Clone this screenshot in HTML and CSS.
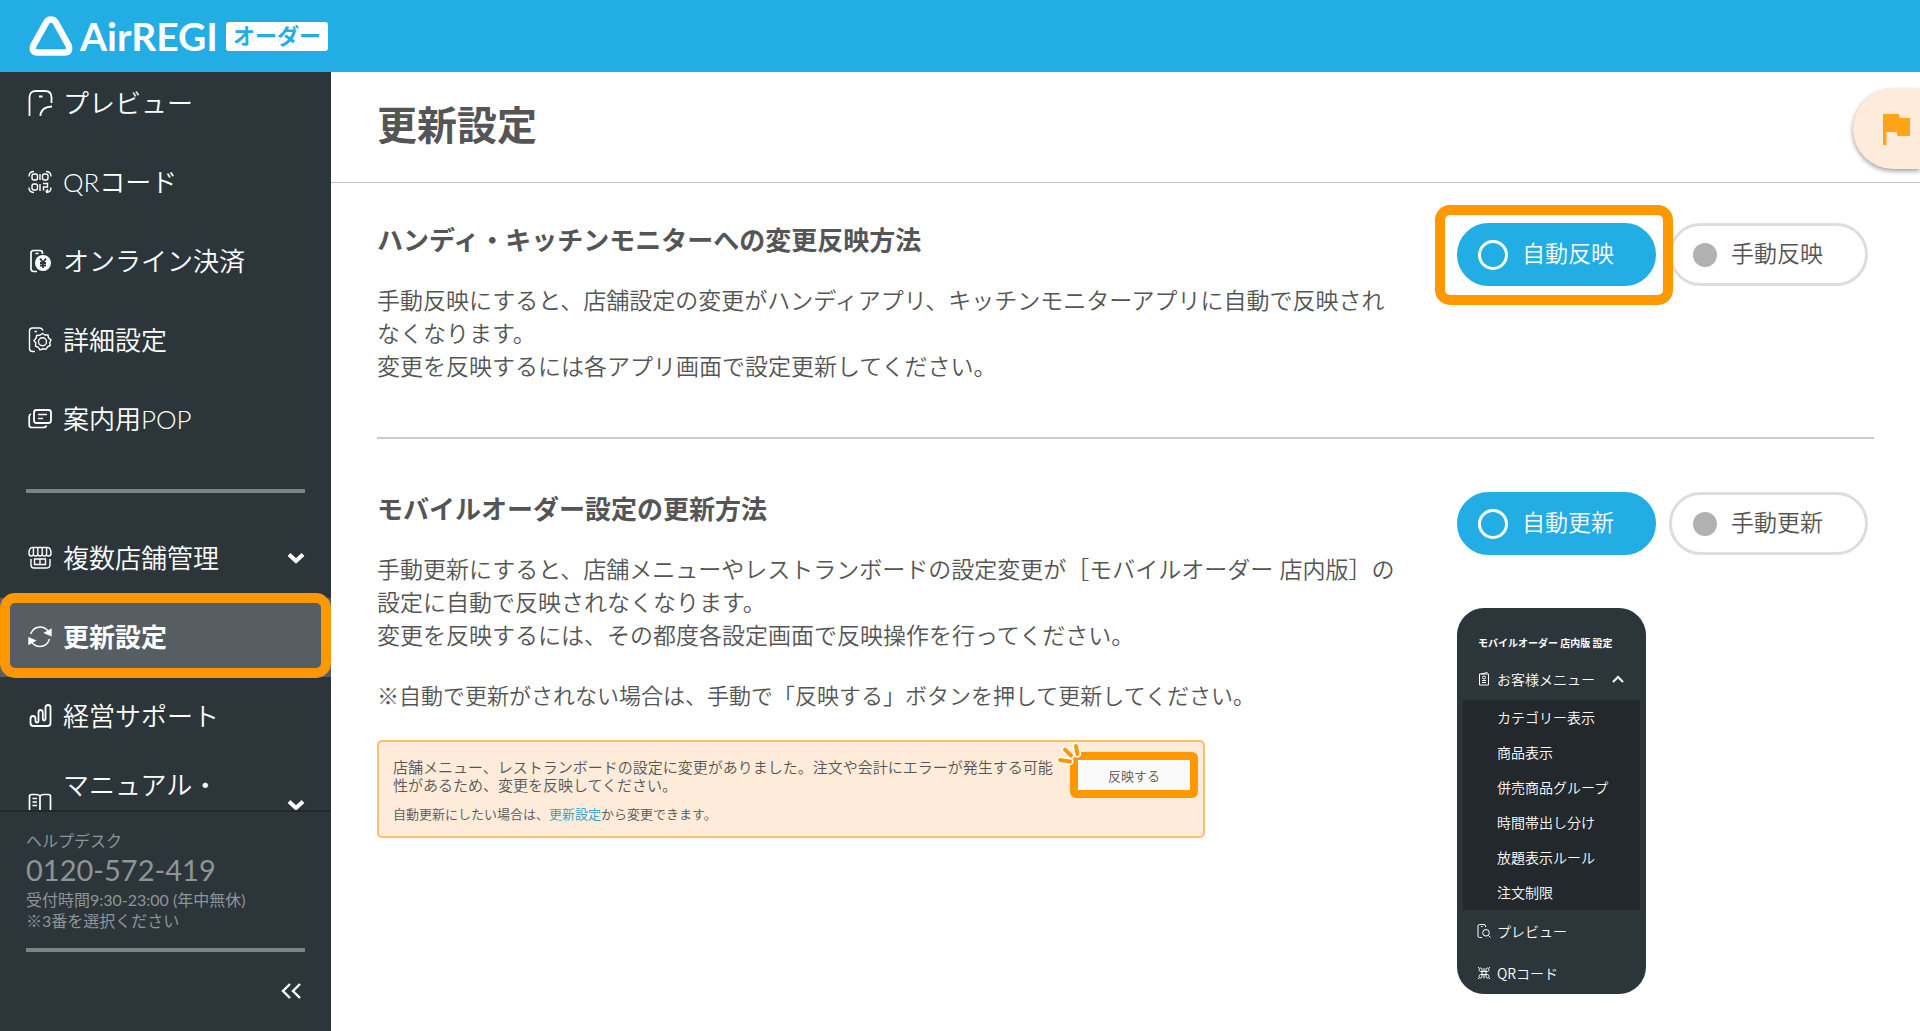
FILE: index.html
```html
<!DOCTYPE html>
<html lang="ja">
<head>
<meta charset="utf-8">
<meta name="viewport" content="width=device-width, initial-scale=1">
<title>更新設定 | AirREGI オーダー</title>
<link rel="stylesheet" href="styles.css">
</head>
<body>
<header class="topbar">
  <a class="logo" href="#">
    <svg class="logo-mark" viewBox="0 0 44 40" aria-hidden="true"><path d="M22 3.500Q25 3.500 26.600 6.200L39.700 29.600Q41.500 36.500 35.500 36.500H8.500Q2.500 36.500 4.300 29.600L17.400 6.200Q19 3.500 22 3.500Z" fill="none" stroke="#fff" stroke-width="6.500" stroke-linejoin="round"/></svg>
    <span class="logo-name">AirREGI</span>
    <span class="logo-badge">オーダー</span>
  </a>
</header>
<div class="shell">
  <aside class="sidebar">
    <nav class="nav">
      <ul class="nav-list nav-list-first">
        <li><a class="nav-item" href="#">
          <svg class="nav-icon" viewBox="0 0 24 24"><path d="M1.500 25V6.500Q1.500 0 8 0H17Q23.500 0 23.500 6.500V12M12.500 25V23Q14 16 24 15.500M11 5.500H14.500" stroke-width="1.800"/></svg>
          <span>プレビュー</span></a></li>
        <li><a class="nav-item" href="#">
          <svg class="nav-icon" viewBox="0 0 24 24"><path d="M1 6.500Q1 1.500 6 1.500M18 1.500Q23 1.500 23 6.500M1 17.500Q1 22.500 6 22.500M18 22.500Q23 22.500 23 17.500M12 4V10M12 14V21M15 13.500H19.500V17H15.500V20.500M19.500 19V21H17.500"/><rect x="4" y="4" width="5.500" height="6" rx="2"/><rect x="14.500" y="4" width="5.500" height="6" rx="2"/><rect x="4" y="14" width="5.500" height="6" rx="2"/></svg>
          <span>QRコード</span></a></li>
        <li><a class="nav-item" href="#">
          <svg class="nav-icon" viewBox="0 0 24 24"><path d="M9 22.500H5.500Q3 22.500 3 19.500V4Q3 1.500 5.500 1.500H12Q14.500 1.500 14.500 4V5M7.500 4.500H10.500" stroke-width="1.700"/><circle cx="15" cy="14" r="8" fill="#fff" stroke="none"/><path d="M12 9.500L15 13.500L18 9.500M12 14H18M12 16.500H18M15 13.500V19" stroke="#2c363a" stroke-width="1.800"/></svg>
          <span>オンライン決済</span></a></li>
        <li><a class="nav-item" href="#">
          <svg class="nav-icon" viewBox="0 0 24 24"><path d="M7 23.500H4.500Q1.500 23.500 1.500 20.500V3Q1.500 0 4.500 0H11.500Q14 0 15 2.500M6.500 3.500H9"/><path d="M14.500 5.500L17 7L20 7L20.500 9.800L23 12L21.800 14.500L22.200 17.500L19.500 18.800L18 21.300L15 20.800L12 21.800L10.300 19.300L7.500 18.200L7.800 15L6 12.500L8 10.500L8.600 7.500L11.700 7.300Z"/><circle cx="14.500" cy="13.800" r="4"/></svg>
          <span>詳細設定</span></a></li>
        <li><a class="nav-item" href="#">
          <svg class="nav-icon" viewBox="0 0 24 24"><rect x="6" y="3" width="17" height="13" rx="2.500" stroke-width="1.800"/><path d="M3 7Q1.200 7.500 1.200 9.500V18Q1.200 20.500 4 20.500H15Q18 20.500 18.500 18.500M10 7.500H19M10 11.500H15" stroke-width="1.700"/></svg>
          <span>案内用POP</span></a></li>
      </ul>
      <hr class="rule">
      <ul class="nav-list">
        <li><a class="nav-item" href="#">
          <svg class="nav-icon" viewBox="0 0 24 24"><path d="M1 7.500Q1 1.500 4.500 1.500H19.500Q23 1.500 23 7.500Q23 10 20.500 10T18.600 8Q18.600 10 16.400 10T14.200 8Q14.200 10 12 10T9.800 8Q9.800 10 7.600 10T5.400 8Q5.400 10 3.200 10T1 7.500M5.400 8V2M9.800 8V2M14.200 8V2M18.600 8V2M3 13V19Q3 22 6 22H18Q22 22 22 19V13M6.500 18.500V13H17.500V18.500ZM12 13V18.500"/></svg>
          <span>複数店舗管理</span>
          <svg class="chevron" viewBox="0 0 18 12"><path d="M2 2.500L9 9L16 2.500"/></svg></a></li>
        <li><a class="nav-item nav-item-current" href="#" aria-current="page">
          <svg class="nav-icon" viewBox="0 0 24 24"><path d="M2.500 9Q5.500 2 12 2Q17 2 20 6M21.500 14Q19 21.500 12 21.500Q7 21.500 4 17.500"/><path d="M23 4.500V10.500L17 8ZM1 19V13L7 15.500Z" fill="#fff"/></svg>
          <span>更新設定</span></a></li>
        <li><a class="nav-item" href="#">
          <svg class="nav-icon" viewBox="0 0 24 24"><path d="M2.500 15Q2.500 12 5 12T7.500 15V17Q7.500 18.500 9 18.500T10.500 17V8.500Q10.500 6 12.500 6T14.800 8.500V15Q14.800 16.500 16 16.500T17.500 15V3.500Q17.500 1 20 1T22.500 3.500V19Q22.500 22 19.500 22H5.500Q2.500 22 2.500 19Z" stroke-width="1.800"/></svg>
          <span>経営サポート</span></a></li>
        <li><a class="nav-item nav-item-tall" href="#">
          <svg class="nav-icon" viewBox="0 0 24 24"><path d="M12 3V19M12 3Q11 1.500 8 1.500H3.500Q1.500 1.500 1.500 3.500V19H22.500V3.500Q22.500 1.500 20.500 1.500H16Q13 1.500 12 3M4.500 5.500H9M4.500 9H9M4.500 12.500H9" stroke-width="1.700"/></svg>
          <span class="nav-label-top">マニュアル・</span>
          <svg class="chevron" viewBox="0 0 18 12"><path d="M2 2.500L9 9L16 2.500"/></svg></a></li>
      </ul>
    </nav>
    <div class="help">
      <p class="help-text">ヘルプデスク</p>
      <p class="help-phone">0120-572-419</p>
      <p class="help-text">受付時間9:30-23:00 (年中無休)<br>※3番を選択ください</p>
      <hr class="rule">
      <button class="collapse" type="button" aria-label="メニューを閉じる">
        <svg viewBox="0 0 20 18"><path d="M9 2L2 9L9 16M19 2L12 9L19 16"/></svg>
      </button>
    </div>
  </aside>

  <main class="main">
    <div class="page-head">
      <h1>更新設定</h1>
      <button class="flag-tab" type="button" aria-label="お知らせ">
        <svg viewBox="0 0 27 31"><path d="M0 0H16L17 4H27V22H14.500L13.500 18H3.500V31H0Z" fill="#ffa417"/></svg>
      </button>
    </div>

    <section class="setting">
      <div class="setting-text">
        <h2>ハンディ・キッチンモニターへの変更反映方法</h2>
        <p>手動反映にすると、店舗設定の変更がハンディアプリ、キッチンモニターアプリに自動で反映されなくなります。<br>変更を反映するには各アプリ画面で設定更新してください。</p>
      </div>
      <div class="setting-side">
        <div class="choices" role="radiogroup" aria-label="変更反映方法">
          <label class="choice choice-marked"><input type="radio" name="reflect" checked><span>自動反映</span></label>
          <label class="choice"><input type="radio" name="reflect"><span>手動反映</span></label>
        </div>
      </div>
    </section>

    <section class="setting setting-second">
      <div class="setting-text">
        <h2>モバイルオーダー設定の更新方法</h2>
        <p>手動更新にすると、店舗メニューやレストランボードの設定変更が［モバイルオーダー 店内版］の設定に自動で反映されなくなります。<br>変更を反映するには、その都度各設定画面で反映操作を行ってください。</p>
        <p class="note">※自動で更新がされない場合は、手動で「反映する」ボタンを押して更新してください。</p>
        <div class="notice">
          <div class="notice-text">
            <p>店舗メニュー、レストランボードの設定に変更がありました。注文や会計にエラーが発生する可能性があるため、変更を反映してください。</p>
            <p class="notice-sub">自動更新にしたい場合は、<a href="#">更新設定</a>から変更できます。</p>
          </div>
          <div class="notice-action">
            <button class="apply" type="button">反映する</button>
            <svg class="spark" viewBox="0 0 26 24" aria-hidden="true"><g stroke="#fff" stroke-width="7"><path d="M4 18L14 19.500M9 7.500L15 13.500M20 4L21.500 12"/></g><g stroke="#ff9800" stroke-width="4"><path d="M4 18L14 19.500M9 7.500L15 13.500M20 4L21.500 12"/></g></svg>
          </div>
        </div>
      </div>
      <div class="setting-side">
        <div class="choices" role="radiogroup" aria-label="更新方法">
          <label class="choice"><input type="radio" name="update" checked><span>自動更新</span></label>
          <label class="choice"><input type="radio" name="update"><span>手動更新</span></label>
        </div>
        <div class="preview">
          <p class="preview-title">モバイルオーダー 店内版 設定</p>
          <div class="preview-row">
            <svg viewBox="0 0 14 14"><path d="M2.500 2H11.500V13H2.500ZM4 2L10.500 .500M5 8.500H9M5 10.500H9"/><circle cx="7" cy="5.500" r="1.500"/></svg>
            <span>お客様メニュー</span>
            <svg class="preview-up" viewBox="0 0 12 8"><path d="M1 7L6 2L11 7"/></svg>
          </div>
          <ul class="preview-sub">
            <li>カテゴリー表示</li>
            <li>商品表示</li>
            <li>併売商品グループ</li>
            <li>時間帯出し分け</li>
            <li>放題表示ルール</li>
            <li>注文制限</li>
          </ul>
          <div class="preview-row">
            <svg viewBox="0 0 14 14"><path d="M5 13.500H2.500Q1 13.500 1 12V2Q1 .500 2.500 .500H7Q8.500 .500 8.500 2V3M4 2.500H5.500M11.500 11.500L13.500 13.500"/><circle cx="9" cy="8.800" r="3.300"/></svg>
            <span>プレビュー</span>
          </div>
          <div class="preview-row">
            <svg viewBox="0 0 14 14"><path d="M5 5.500V3.500Q5 2 3.500 2T2 3.500T3.500 5.500H10.500Q12 5 12 3.500T10.500 2T9 3.500V10.500Q9 12 10.500 12T12 10.500T10.500 8.500H3.500Q2 9 2 10.500T3.500 12T5 10.500V5.500M7 2V5M7 9V12.500M1 1L2 2M12 2L13 1M1 13L2 12M12 12L13 13"/></svg>
            <span>QRコード</span>
          </div>
        </div>
      </div>
    </section>
  </main>
</div>
</body>
</html>
```
FILE: styles.css
```css
* {
  box-sizing: border-box;
}

:root {
  --blue: #22ade5;
  --dark: #2c363a;
  --orange: #ff9800;
  --text: #555;
}

body,
h1,
h2,
p,
ul {
  margin: 0;
  padding: 0;
}

ul {
  list-style: none;
}

body {
  display: flex;
  flex-direction: column;
  height: 100vh;
  color: var(--text);
  background: #fff;
  font-family: Lato, "Noto Sans CJK JP", sans-serif;
  font-weight: 350;
}

button {
  font: inherit;
  color: inherit;
  cursor: pointer;
}

.topbar {
  flex: none;
  display: flex;
  align-items: center;
  height: 72px;
  padding-left: 29px;
  background: var(--blue);
}

.logo {
  display: flex;
  align-items: center;
  color: #fff;
  text-decoration: none;
}

.logo-mark {
  width: 44px;
  height: 40px;
}

.logo-name {
  margin-left: 7px;
  font-size: 39px;
  font-weight: 700;
  line-height: 40px;
}

.logo-badge {
  height: 29px;
  margin-left: 8px;
  padding: 0 7px;
  border-radius: 3px;
  background: #fff;
  color: var(--blue);
  font-size: 22px;
  font-weight: 700;
  line-height: 28px;
}

.shell {
  flex: 1;
  display: flex;
  min-height: 0;
}

/* Sidebar */

.sidebar {
  flex: none;
  display: flex;
  flex-direction: column;
  width: 331px;
  background: var(--dark);
  color: #fff;
}

.nav {
  flex: 1;
  min-height: 0;
  overflow: hidden;
}

.nav-list-first {
  margin-top: -8px;
}

.nav-item {
  position: relative;
  display: flex;
  align-items: center;
  gap: 11px;
  height: 79px;
  padding: 0 26px 2px 28px;
  color: #fff;
  font-size: 26px;
  line-height: 38px;
  text-decoration: none;
}

.nav-item-current {
  background: #565d63;
  font-weight: 700;
}

.nav-item-current::after {
  content: "";
  position: absolute;
  inset: -5px 0 -1px;
  border: 10px solid var(--orange);
  border-radius: 15px;
}

.nav-item-tall {
  height: 100px;
}

.nav-label-top {
  align-self: flex-start;
  padding-top: 10px;
}

.nav-icon {
  flex: none;
  width: 24px;
  height: 24px;
  overflow: visible;
  fill: none;
  stroke: #fff;
  stroke-width: 1.4;
}

.chevron {
  width: 18px;
  height: 12px;
  margin-left: auto;
  fill: none;
  stroke: #fff;
  stroke-width: 4;
}

.rule {
  height: 4px;
  margin: 30px 26px 26px;
  border: 0;
  background: #7d8286;
}

.help {
  flex: none;
  height: 221px;
  padding-top: 18px;
  border-top: 2px solid #20282b;
  color: #8f9496;
  font-weight: 400;
}

.help-text {
  padding-left: 26px;
  font-size: 16px;
  line-height: 21px;
}

.help-phone {
  padding-left: 26px;
  font-size: 29px;
  line-height: 38px;
}

.help .rule {
  margin: 17px 26px 24px;
}

.collapse {
  display: flex;
  margin-left: auto;
  margin-right: 24px;
  padding: 6px;
  border: 0;
  background: none;
}

.collapse svg {
  width: 20px;
  height: 18px;
  fill: none;
  stroke: #fff;
  stroke-width: 2.4;
}

/* Main column */

.main {
  flex: 1;
  min-width: 0;
}

.page-head {
  display: flex;
  align-items: flex-start;
  justify-content: space-between;
  height: 111px;
  padding: 17px 0 0 46px;
  border-bottom: 1px solid #c4c4c4;
}

h1 {
  margin-top: 8px;
  font-size: 40px;
  font-weight: 700;
  line-height: 56px;
}

.flag-tab {
  display: flex;
  align-items: center;
  width: 67px;
  height: 80px;
  padding: 0 0 0 30px;
  border: 0;
  border-radius: 40px 0 0 40px;
  background: #feebd9;
  box-shadow: 0 2px 5px rgba(0, 0, 0, 0.4);
}

.flag-tab svg {
  width: 27px;
  height: 31px;
}

.setting {
  display: flex;
  gap: 54px;
  margin: 0 46px;
  padding: 38px 0 54px;
}

.setting-second {
  padding-top: 51px;
  border-top: 2px solid #ccc;
}

.setting-text {
  flex: 1;
  min-width: 0;
  font-size: 23px;
  line-height: 33px;
}

h2 {
  margin-bottom: 25px;
  font-size: 26px;
  font-weight: 700;
  line-height: 38px;
}

.note {
  margin-top: 27px;
  font-size: 22px;
}

.setting-side {
  flex: none;
  width: 417px;
  padding-top: 2px;
}

.choices {
  display: flex;
  gap: 13px;
}

.choice {
  position: relative;
  display: flex;
  align-items: center;
  gap: 14px;
  width: 199px;
  height: 63px;
  padding-left: 21px;
  border: 3px solid #ddd;
  border-radius: 32px;
  font-size: 23px;
  line-height: 34px;
}

.choice span {
  padding-bottom: 3px;
}

.choice input {
  appearance: none;
  width: 24px;
  height: 24px;
  margin: 0;
  border-radius: 50%;
  background: #b1b1b1;
}

.choice:has(:checked) {
  padding-left: 18px;
  border-color: var(--blue);
  background: var(--blue);
  color: #fff;
}

.choice input:checked {
  width: 30px;
  height: 30px;
  border: 3px solid #fff;
  background: none;
}

.choice-marked::after {
  content: "";
  position: absolute;
  z-index: 1;
  inset: -21px -20px -22px -25px;
  border: 10px solid var(--orange);
  border-radius: 15px;
}

/* Change notice */

.notice {
  display: flex;
  justify-content: space-between;
  width: 828px;
  max-width: 100%;
  height: 98px;
  margin-top: 28px;
  padding: 10px 5px 0 14px;
  border: 2px solid #fdbf6b;
  border-radius: 5px;
  background: #ffebd9;
}

.notice-text {
  width: 660px;
  padding-top: 6px;
  font-size: 15px;
  line-height: 18px;
}

.notice-sub {
  margin-top: 11px;
  font-size: 13px;
}

.notice-sub a {
  color: #1a9fd0;
  text-decoration: none;
}

.notice-action {
  position: relative;
}

.apply {
  display: block;
  width: 128px;
  height: 46px;
  padding: 0;
  border: 8px solid var(--orange);
  border-radius: 6px;
  background: #fafafa;
  font-size: 13px;
}

.spark {
  position: absolute;
  top: -10px;
  left: -14px;
  width: 26px;
  height: 24px;
  fill: none;
  stroke-linecap: round;
}

/* Phone menu preview */

.preview {
  width: 189px;
  margin-top: 53px;
  border-radius: 27px;
  background: var(--dark);
  color: #fff;
  font-family: "Noto Sans CJK JP", sans-serif;
  font-size: 14px;
  overflow: hidden;
}

.preview-title {
  height: 50px;
  padding: 20px 0 0 21px;
  font-size: 10px;
  font-weight: 700;
  line-height: 30px;
}

.preview-row {
  display: flex;
  align-items: center;
  gap: 6px;
  height: 42px;
  padding: 0 22px 0 20px;
}

.preview svg {
  width: 14px;
  height: 14px;
  fill: none;
  stroke: #fff;
  stroke-width: 1;
}

.preview .preview-up {
  width: 12px;
  height: 8px;
  margin-left: auto;
  stroke-width: 2;
}

.preview-sub {
  margin: 0 6px;
  background: #22282b;
}

.preview-sub li {
  padding-left: 34px;
  line-height: 35px;
}
```
